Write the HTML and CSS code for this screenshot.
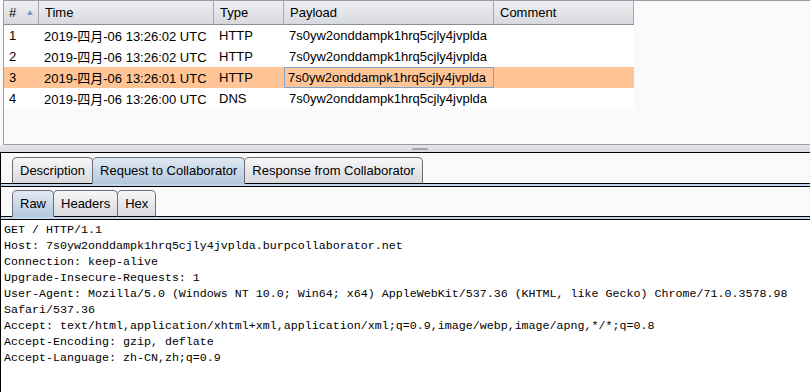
FILE: index.html
```html
<!DOCTYPE html>
<html lang="zh-CN">
<head>
    <meta charset="UTF-8">
    <meta name="viewport" content="width=device-width, initial-scale=1.0">
    <title>Burp Collaborator client</title>
    <link rel="stylesheet" href="styles.css">
</head>
<body>
    <div class="pane-top">
        <div class="grid">
            <div class="row head">
                <div class="cell">#<span class="sort"></span></div>
                <div class="cell">Time</div>
                <div class="cell">Type</div>
                <div class="cell">Payload</div>
                <div class="cell">Comment</div>
            </div>
            <div class="row">
                <div class="cell">1</div>
                <div class="cell">2019-四月-06 13:26:02 UTC</div>
                <div class="cell">HTTP</div>
                <div class="cell">7s0yw2onddampk1hrq5cjly4jvplda</div>
                <div class="cell"></div>
            </div>
            <div class="row">
                <div class="cell">2</div>
                <div class="cell">2019-四月-06 13:26:02 UTC</div>
                <div class="cell">HTTP</div>
                <div class="cell">7s0yw2onddampk1hrq5cjly4jvplda</div>
                <div class="cell"></div>
            </div>
            <div class="row selected">
                <div class="cell">3</div>
                <div class="cell">2019-四月-06 13:26:01 UTC</div>
                <div class="cell">HTTP</div>
                <div class="cell focus">7s0yw2onddampk1hrq5cjly4jvplda</div>
                <div class="cell"></div>
            </div>
            <div class="row">
                <div class="cell">4</div>
                <div class="cell">2019-四月-06 13:26:00 UTC</div>
                <div class="cell">DNS</div>
                <div class="cell">7s0yw2onddampk1hrq5cjly4jvplda</div>
                <div class="cell"></div>
            </div>
        </div>
    </div>

    <div class="splitter"><span class="grip"></span></div>

    <div class="pane-bottom">
        <div class="tabs outer">
            <div class="tab">Description</div>
            <div class="tab active">Request to Collaborator</div>
            <div class="tab">Response from Collaborator</div>
        </div>
        <div class="band"></div>
        <div class="tabs inner">
            <div class="tab active">Raw</div>
            <div class="tab">Headers</div>
            <div class="tab">Hex</div>
        </div>
        <div class="band"></div>
<pre class="raw">GET / HTTP/1.1
Host: 7s0yw2onddampk1hrq5cjly4jvplda.burpcollaborator.net
Connection: keep-alive
Upgrade-Insecure-Requests: 1
User-Agent: Mozilla/5.0 (Windows NT 10.0; Win64; x64) AppleWebKit/537.36 (KHTML, like Gecko) Chrome/71.0.3578.98 Safari/537.36
Accept: text/html,application/xhtml+xml,application/xml;q=0.9,image/webp,image/apng,*/*;q=0.8
Accept-Encoding: gzip, deflate
Accept-Language: zh-CN,zh;q=0.9
</pre>
    </div>
</body>
</html>
```

FILE: styles.css
```css
* {
    box-sizing: border-box;
}
body {
    margin: 0;
    width: 810px;
    height: 392px;
    overflow: hidden;
    background: #fafafa;
    font-family: "Liberation Sans", Arial, "Noto Sans CJK SC", sans-serif;
    font-size: 13px;
    color: #000;
    display: flex;
    flex-direction: column;
}
.pane-top {
    height: 145px;
    margin-left: 3px;
    border: 1px solid #9c9ca4;
    border-right: none;
    background: #fafafa;
    flex-shrink: 0;
}
.grid {
    width: 630px;
}
.row {
    display: grid;
    grid-template-columns: 35px 175px 70px 210px 140px;
    height: 21px;
    background: #fff;
}
.row.head {
    height: 24px;
    background: linear-gradient(#eff0f3, #d8d9de);
    border-bottom: 1px solid #8e8e96;
}
.cell {
    display: flex;
    align-items: center;
    padding: 0 5px;
    white-space: nowrap;
    overflow: hidden;
}
.head .cell {
    border-right: 1px solid #a6a6ae;
}
.head .cell + .cell {
    padding-left: 6px;
}
.sort {
    width: 0;
    height: 0;
    margin-left: 11px;
    border-left: 3.5px solid transparent;
    border-right: 3.5px solid transparent;
    border-bottom: 5px solid #7b9bc4;
}
.row.selected {
    background: #ffc597;
}
.cell.focus {
    border: 1px solid #7ea4d0;
    padding-left: 3px;
}
.splitter {
    height: 7px;
    flex-shrink: 0;
    background: linear-gradient(#e6e6ea, #d8d8de);
    padding: 3px 0 0 412px;
}
.grip {
    display: block;
    width: 16px;
    height: 2px;
    border-radius: 1px;
    background: #a4a4ac;
}
.pane-bottom {
    flex: 1;
    display: flex;
    flex-direction: column;
    border-top: 1px solid #000;
    border-left: 1px solid #000;
    min-height: 0;
}
.tabs {
    display: flex;
    padding-left: 11px;
    border-bottom: 1px solid #000;
}
.tabs.outer {
    padding-top: 4px;
}
.tabs.inner {
    padding-top: 3px;
}
.tab {
    height: 27px;
    margin-bottom: -1px;
    padding: 0 7px;
    display: flex;
    align-items: center;
    border: 1px solid #6e6e76;
    border-bottom-color: #000;
    border-radius: 5px 5px 0 0;
    background: linear-gradient(#f7f7f9, #d9d9de);
}
.tab + .tab {
    margin-left: -1px;
}
.tab.active {
    position: relative;
    background: linear-gradient(#e2eaf3, #b4c8de);
    border-bottom-color: #b4c8de;
}
.band {
    height: 3px;
    flex-shrink: 0;
    background: #c2d5ea;
    border-bottom: 1px solid #000;
}
.raw {
    flex: 1;
    margin: 0;
    padding: 2px 3px;
    background: #fff;
    font-family: "Liberation Mono", "Courier New", monospace;
    font-size: 11.67px;
    line-height: 16px;
    white-space: pre-wrap;
}
```
